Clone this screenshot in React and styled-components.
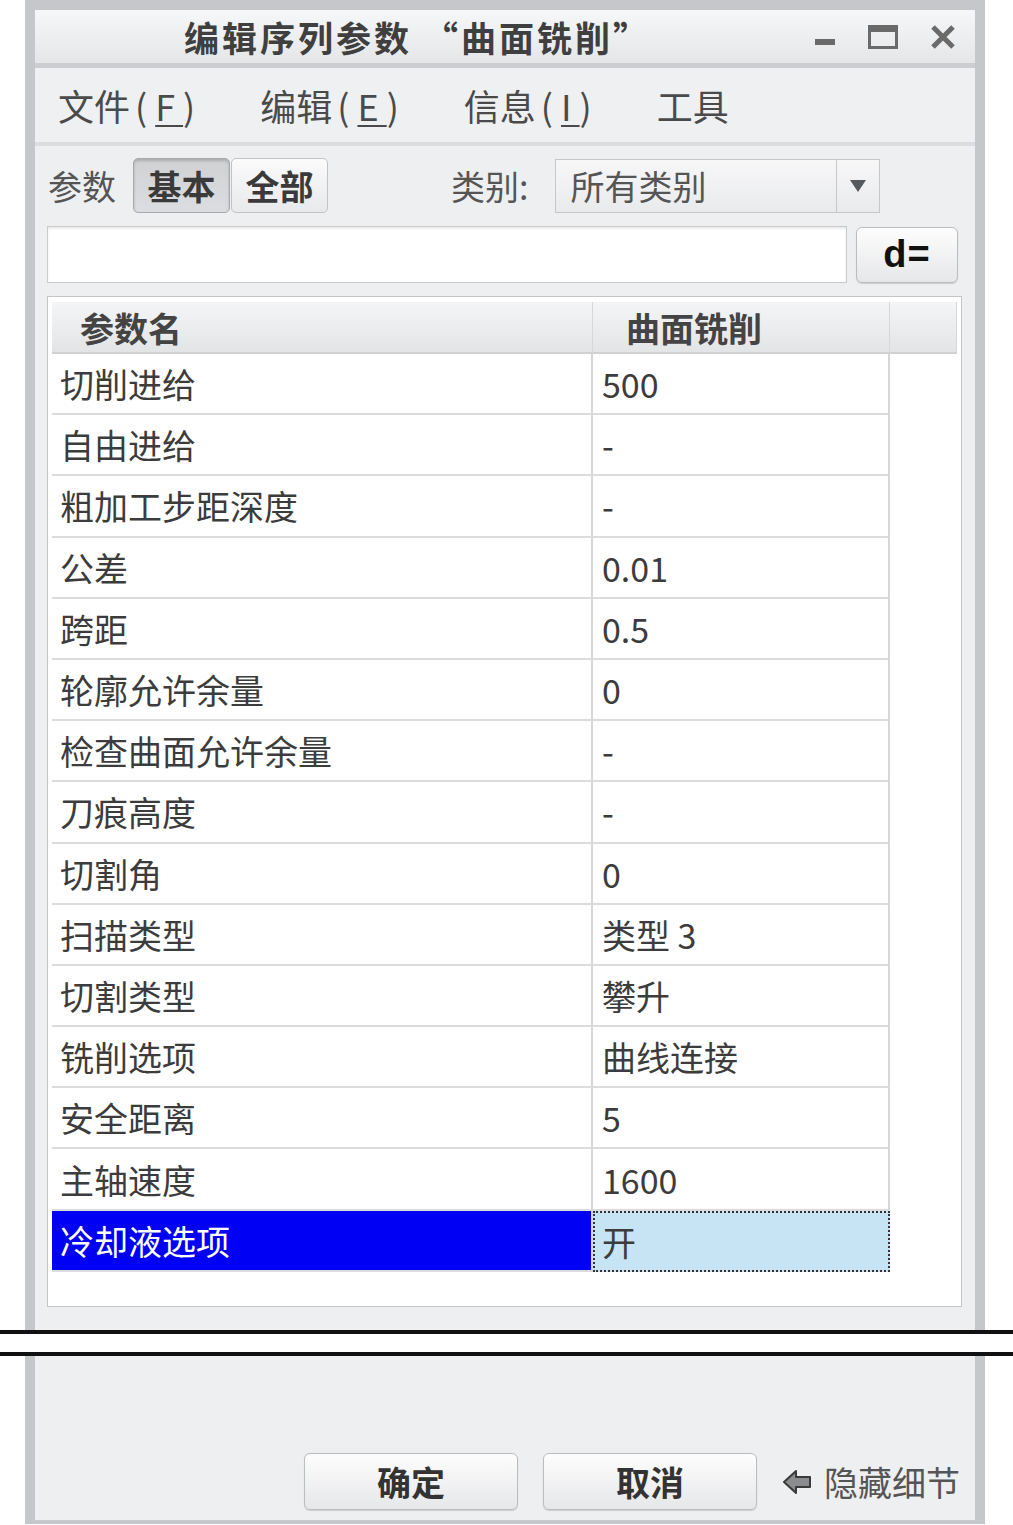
import styled, { createGlobalStyle } from 'styled-components';

const GlobalStyle = createGlobalStyle`
  html, body {
    margin: 0;
    padding: 0;
    background: #ffffff;
  }
  body {
    font-family: "Noto Sans CJK SC", "Noto Sans", sans-serif;
  }
`;

const Page = styled.div`
  width: 1013px;
  height: 1525px;
  overflow: hidden;
  background: #ffffff;
`;

const WindowTop = styled.div`
  margin-left: 25px;
  width: 960px;
  box-sizing: border-box;
  border: 10px solid #c5c7ca;
  border-bottom: none;
  background: #eeeff1;
`;

const WindowBottom = styled.div`
  margin-left: 25px;
  width: 960px;
  height: 168px;
  box-sizing: border-box;
  border: 10px solid #c5c7ca;
  border-top: none;
  border-bottom-width: 4px;
  background: #eeeff1;
  display: flex;
  align-items: flex-end;
  justify-content: flex-end;
  padding: 0 15px 10px 0;
  gap: 25px;
`;

const Break = styled.div`
  height: 18px;
  background: #ffffff;
  border-top: 4px solid #111;
  border-bottom: 4px solid #111;
`;

const TitleBar = styled.div`
  height: 53px;
  display: flex;
  align-items: center;
  background: linear-gradient(#f6f7f8, #e5e6e8);
  border-bottom: 5px solid #cbcdd0;
`;

const Title = styled.div`
  flex: 1;
  text-align: center;
  font-size: 35px;
  font-weight: 700;
  color: #3f3f3f;
  letter-spacing: 3px;
`;

const Controls = styled.div`
  width: 175px;
  display: flex;
  align-items: center;
  gap: 32px;
  padding-left: 14px;
  box-sizing: border-box;
`;

const MenuBar = styled.div`
  height: 74px;
  display: flex;
  align-items: center;
  gap: 57px;
  padding-left: 23px;
  background: #eff0f2;
  border-bottom: 4px solid #dcdde0;
`;

const MenuItem = styled.div`
  font-size: 36px;
  color: #4a4a4a;
`;

const Mnemonic = styled.span`
  margin-left: 5px;
  letter-spacing: 8px;
  u {
    text-decoration-thickness: 2px;
    text-underline-offset: 4px;
  }
`;

const Body = styled.div`
  padding: 12px 13px 23px 12px;
  display: flex;
  flex-direction: column;
  gap: 13px;
`;

const ToolRow = styled.div`
  height: 55px;
  display: flex;
  align-items: center;
`;

const Label = styled.div`
  font-size: 34px;
  color: #555;
  margin-left: ${(p) => p.$ml || 0}px;
`;

const Segment = styled.div`
  display: flex;
  margin-left: 17px;
`;

const SegButton = styled.div`
  width: 97px;
  height: 55px;
  box-sizing: border-box;
  display: flex;
  align-items: center;
  justify-content: center;
  font-size: 34px;
  font-weight: 700;
  color: #3a3a3a;
  border-radius: 5px;
  border: 1px solid ${(p) => (p.$pressed ? '#a8a9ab' : '#c2c3c5')};
  background: ${(p) =>
    p.$pressed ? 'linear-gradient(#d0d1d3, #dcdde0)' : 'linear-gradient(#fbfbfc, #e8e9eb)'};
  box-shadow: ${(p) => (p.$pressed ? 'inset 0 2px 3px rgba(0,0,0,0.18)' : 'none')};
  & + & {
    margin-left: 1px;
  }
`;

const Select = styled.div`
  margin-left: 27px;
  width: 325px;
  height: 54px;
  box-sizing: border-box;
  display: flex;
  border: 1px solid #c6c7c9;
  background: linear-gradient(#f7f7f8, #e9eaec);
`;

const SelectText = styled.div`
  flex: 1;
  padding-left: 14px;
  font-size: 34px;
  color: #555;
  display: flex;
  align-items: center;
`;

const SelectArrow = styled.div`
  width: 42px;
  border-left: 1px solid #c6c7c9;
  display: flex;
  align-items: center;
  justify-content: center;
`;

const InputRow = styled.div`
  display: flex;
  align-items: center;
  gap: 9px;
`;

const TextInput = styled.div`
  width: 800px;
  height: 57px;
  box-sizing: border-box;
  background: #fff;
  border: 1px solid #c9cacc;
  box-shadow: inset 0 2px 2px rgba(0, 0, 0, 0.08);
`;

const Button = styled.div`
  width: ${(p) => p.$w}px;
  height: ${(p) => p.$h}px;
  box-sizing: border-box;
  display: flex;
  align-items: center;
  justify-content: center;
  border-radius: 6px;
  border: 1px solid #bbbcbe;
  background: linear-gradient(#fdfdfd, #e6e7e9);
  box-shadow: 0 1px 1px rgba(0, 0, 0, 0.15);
  font-size: 34px;
  font-weight: 700;
  color: #333;
`;

const DButton = styled(Button)`
  font-family: "Liberation Sans", Arial, sans-serif;
  font-size: 38px;
  color: #111;
  letter-spacing: 1px;
`;

const TablePanel = styled.div`
  height: 1011px;
  box-sizing: border-box;
  background: #fff;
  border: 1px solid #c4c5c7;
  padding: 5px 4px 0 4px;
`;

const Grid = styled.div`
  display: grid;
  grid-template-columns: 541px 297px 1fr;
`;

const HeadCell = styled.div`
  height: 52px;
  box-sizing: border-box;
  display: flex;
  align-items: center;
  padding-left: ${(p) => p.$pl || 0}px;
  background: linear-gradient(#f4f5f6, #e3e4e6);
  border-bottom: 2px solid #d0d1d3;
  border-right: 1px solid #d6d7d9;
  font-size: 34px;
  font-weight: 700;
  color: #444;
`;

const Cell = styled.div`
  height: 61.2px;
  box-sizing: border-box;
  display: flex;
  align-items: center;
  padding-left: ${(p) => p.$pl}px;
  font-size: 34px;
  color: ${(p) => (p.$sel ? '#fff' : '#3c3c3c')};
  background: ${(p) => (p.$sel ? '#0000f5' : '#fff')};
  border-bottom: 2px solid #dcdcdc;
  border-right: 2px solid #d6d6d6;
`;

const ValueCell = styled(Cell)`
  background: ${(p) => (p.$sel ? '#c6e4f4' : '#fff')};
  color: #3c3c3c;
  border: ${(p) => (p.$sel ? '2px dotted #333' : undefined)};
  padding-left: ${(p) => (p.$sel ? 7 : 9)}px;
`;

const Filler = styled.div``;

const HideLink = styled.div`
  height: 57px;
  display: flex;
  align-items: center;
  gap: 12px;
  font-size: 34px;
  color: #555;
`;

const rows = [
  ['切削进给', '500'],
  ['自由进给', '-'],
  ['粗加工步距深度', '-'],
  ['公差', '0.01'],
  ['跨距', '0.5'],
  ['轮廓允许余量', '0'],
  ['检查曲面允许余量', '-'],
  ['刀痕高度', '-'],
  ['切割角', '0'],
  ['扫描类型', '类型 3'],
  ['切割类型', '攀升'],
  ['铣削选项', '曲线连接'],
  ['安全距离', '5'],
  ['主轴速度', '1600'],
  ['冷却液选项', '开'],
];

const menus = [
  ['文件', 'F'],
  ['编辑', 'E'],
  ['信息', 'I'],
  ['工具', null],
];

const MinIcon = () => (
  <svg width="22" height="24" viewBox="0 0 22 24">
    <rect x="1" y="14" width="20" height="6" fill="#6a6a6a" />
  </svg>
);

const MaxIcon = () => (
  <svg width="30" height="24" viewBox="0 0 30 24">
    <rect x="1.5" y="1.5" width="27" height="21" fill="none" stroke="#6a6a6a" strokeWidth="3" />
    <rect x="1" y="1" width="28" height="6" fill="#6a6a6a" />
  </svg>
);

const CloseIcon = () => (
  <svg width="26" height="24" viewBox="0 0 26 24">
    <path d="M3 2 L23 22 M23 2 L3 22" stroke="#6a6a6a" strokeWidth="5" />
  </svg>
);

const DownArrow = () => (
  <svg width="18" height="14" viewBox="0 0 18 14">
    <path d="M1 1 H17 L9 13 Z" fill="#555a60" />
  </svg>
);

const BackArrow = () => (
  <svg width="30" height="26" viewBox="0 0 30 26">
    <path
      d="M2 13 L14 2 V8 H28 V18 H14 V24 Z"
      fill="#8a8c8f"
      stroke="#3a3a3a"
      strokeWidth="2"
      strokeLinejoin="round"
    />
  </svg>
);

export default function App() {
  return (
    <Page>
      <GlobalStyle />
      <WindowTop>
        <TitleBar>
          <Title>编辑序列参数 “曲面铣削”</Title>
          <Controls>
            <MinIcon />
            <MaxIcon />
            <CloseIcon />
          </Controls>
        </TitleBar>
        <MenuBar>
          {menus.map(([label, key]) => (
            <MenuItem key={label}>
              {label}
              {key && (
                <Mnemonic>
                  (<u>{key}</u>)
                </Mnemonic>
              )}
            </MenuItem>
          ))}
        </MenuBar>
        <Body>
          <ToolRow>
            <Label $ml={1}>参数</Label>
            <Segment>
              <SegButton $pressed>基本</SegButton>
              <SegButton>全部</SegButton>
            </Segment>
            <Label $ml={123}>类别:</Label>
            <Select>
              <SelectText>所有类别</SelectText>
              <SelectArrow>
                <DownArrow />
              </SelectArrow>
            </Select>
          </ToolRow>
          <InputRow>
            <TextInput />
            <DButton $w={102} $h={56}>d=</DButton>
          </InputRow>
          <TablePanel>
            <Grid>
              <HeadCell $pl={28}>参数名</HeadCell>
              <HeadCell $pl={33}>曲面铣削</HeadCell>
              <HeadCell />
              {rows.map(([name, value], i) => {
                const sel = i === rows.length - 1;
                return [
                  <Cell key={`n${i}`} $pl={8} $sel={sel}>
                    {name}
                  </Cell>,
                  <ValueCell key={`v${i}`} $sel={sel}>
                    {value}
                  </ValueCell>,
                  <Filler key={`f${i}`} />,
                ];
              })}
            </Grid>
          </TablePanel>
        </Body>
      </WindowTop>
      <Break />
      <WindowBottom>
        <Button $w={214} $h={57}>确定</Button>
        <Button $w={214} $h={57}>取消</Button>
        <HideLink>
          <BackArrow />
          隐藏细节
        </HideLink>
      </WindowBottom>
    </Page>
  );
}
